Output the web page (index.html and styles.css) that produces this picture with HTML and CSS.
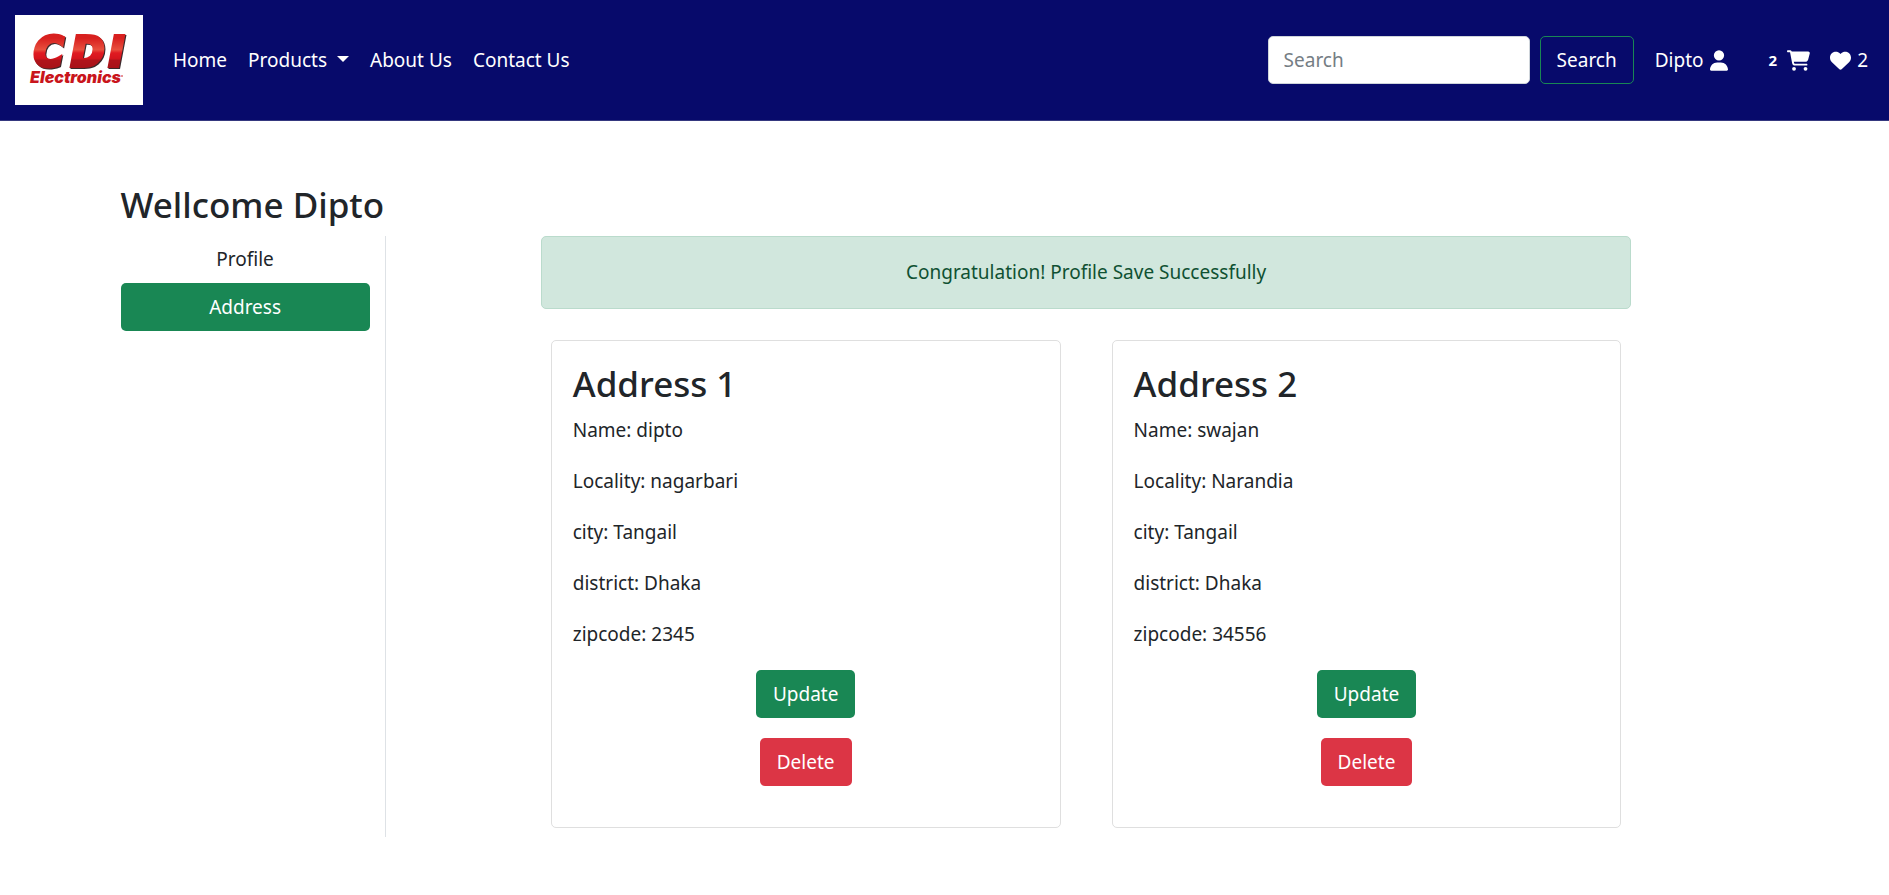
FILE: index.html
```html
<!DOCTYPE html>
<html lang="en">
<head>
<meta charset="utf-8">
<meta name="viewport" content="width=device-width, initial-scale=1">
<title>Address</title>
<link rel="stylesheet" href="styles.css">
</head>
<body>
<header class="navbar">
  <a class="brand" href="#" aria-label="CDI Electronics">
    <svg class="logo" viewBox="0 0 128 90" role="img" aria-hidden="true">
      <defs>
        <linearGradient id="red" x1="0" y1="0" x2="0" y2="1">
          <stop offset="0.2" stop-color="#d8201f"/>
          <stop offset="0.45" stop-color="#e8503e"/>
          <stop offset="0.52" stop-color="#e01b22"/>
          <stop offset="0.64" stop-color="#d5151d"/>
          <stop offset="0.68" stop-color="#b0141b"/>
          <stop offset="1" stop-color="#a01015"/>
        </linearGradient>
      </defs>
      <rect width="128" height="90" fill="#fff"/>
      <text class="logo-main" x="19 56 94" y="51" fill="url(#red)" stroke="url(#red)">CDI</text>
      <text class="logo-sub" x="15" y="68">Electronics</text>
      <circle cx="107" cy="61" r="1" fill="#e07070"/>
    </svg>
  </a>
  <nav class="links" aria-label="Main">
    <a href="#">Home</a>
    <a class="dropdown" href="#">Products</a>
    <a href="#">About Us</a>
    <a href="#">Contact Us</a>
  </nav>
  <form class="search" role="search">
    <input class="search-box" type="search" placeholder="Search" aria-label="Search">
    <button class="btn btn-outline" type="submit">Search</button>
  </form>
  <nav class="account" aria-label="Account">
    <a class="user" href="#">Dipto
      <svg class="icon-user" viewBox="0 0 448 512" aria-hidden="true"><path d="M224 256A128 128 0 1 0 224 0a128 128 0 1 0 0 256zm-45.700 48C79.800 304 0 383.800 0 482.300 0 498.700 13.300 512 29.700 512h388.600c16.400 0 29.700-13.300 29.700-29.700 0-98.500-79.800-178.300-178.300-178.300z"/></svg>
    </a>
    <a class="cart" href="#" aria-label="Cart"><span class="badge">2</span>
      <svg class="icon-cart" viewBox="0 0 576 512" aria-hidden="true"><path d="M0 24C0 10.700 10.700 0 24 0h45.500c22 0 41.500 12.800 50.600 32h411c26.300 0 45.500 25 38.600 50.400l-41 152.300c-8.500 31.400-37 53.300-69.500 53.300H170.700l5.400 28.500c2.200 11.300 12.100 19.500 23.600 19.500H488c13.300 0 24 10.700 24 24s-10.700 24-24 24H199.700c-34.600 0-64.300-24.600-70.700-58.500L77.400 54.500C76.700 50.700 73.400 48 69.500 48H24C10.700 48 0 37.300 0 24zm128 440a48 48 0 1 1 96 0 48 48 0 1 1-96 0zm336-48a48 48 0 1 1 0 96 48 48 0 1 1 0-96z"/></svg>
    </a>
    <a class="wish" href="#" aria-label="Wishlist">
      <svg class="icon-heart" viewBox="0 0 512 512" aria-hidden="true"><path d="M47.600 300.400 228.300 469.100c7.500 7 17.400 10.900 27.700 10.900s20.200-3.900 27.700-10.900L464.400 300.400c30.400-28.300 47.600-68 47.600-109.500v-5.800c0-69.900-50.500-129.500-119.400-141C347 36.500 300.600 51.400 268 84l-12 12-12-12c-32.600-32.600-79-47.500-124.600-39.900C50.500 55.600 0 115.200 0 185.100v5.800c0 41.500 17.200 81.200 47.600 109.500z"/></svg>
      <span>2</span>
    </a>
  </nav>
</header>
<main class="container">
  <h2>Wellcome Dipto</h2>
  <div class="layout">
    <aside class="sidebar">
      <a class="side-link" href="#">Profile</a>
      <a class="side-link active" href="#" aria-current="page">Address</a>
    </aside>
    <section class="content">
      <div class="alert" role="alert">Congratulation! Profile Save Successfully</div>
      <div class="cards">
        <article class="card">
          <h2>Address 1</h2>
          <p>Name: dipto</p>
          <p>Locality: nagarbari</p>
          <p>city: Tangail</p>
          <p>district: Dhaka</p>
          <p>zipcode: 2345</p>
          <div class="actions">
            <button class="btn btn-success" type="button">Update</button>
            <button class="btn btn-danger" type="button">Delete</button>
          </div>
        </article>
        <article class="card">
          <h2>Address 2</h2>
          <p>Name: swajan</p>
          <p>Locality: Narandia</p>
          <p>city: Tangail</p>
          <p>district: Dhaka</p>
          <p>zipcode: 34556</p>
          <div class="actions">
            <button class="btn btn-success" type="button">Update</button>
            <button class="btn btn-danger" type="button">Delete</button>
          </div>
        </article>
      </div>
    </section>
  </div>
</main>
</body>
</html>
```
FILE: styles.css
```css
* {
  box-sizing: border-box;
}

body {
  margin: 0;
  background: #fff;
  color: #212529;
  font-family: "Noto Sans", "Open Sans", sans-serif;
  font-size: 19px;
  line-height: 31px;
}

a {
  color: inherit;
  text-decoration: none;
}

h2 {
  margin: 0 0 8px;
  font-size: 35px;
  font-weight: 500;
  line-height: 46px;
}

p {
  margin: 0 0 20px;
}

/* Navigation bar */
.navbar {
  display: flex;
  align-items: center;
  padding: 15px 21px 15px 15px;
  border-bottom: 1px solid #35387f;
  background: #070a6b;
  color: #fff;
}

.brand {
  margin-right: 30px;
}

.logo {
  display: block;
  width: 128px;
  height: 90px;
}

.logo-main {
  filter: drop-shadow(1px 1px 0 #3a2a2c);
  font: italic 700 40px "DejaVu Sans", sans-serif;
  stroke-width: 4px;
}

.logo-sub {
  fill: #c9151c;
  font: italic 900 16px Inter, sans-serif;
}

.links {
  display: flex;
  gap: 21px;
  margin-right: auto;
}

.dropdown::after {
  content: "";
  display: inline-block;
  margin-left: 10px;
  border-top: 6px solid;
  border-right: 6px solid transparent;
  border-left: 6px solid transparent;
  vertical-align: 5px;
}

.search {
  display: flex;
  gap: 10px;
  margin-right: 21px;
}

.search-box {
  width: 262px;
  height: 48px;
  padding: 0 15px;
  border: 1px solid #ced4da;
  border-radius: 5px;
  background: #fff;
  color: #212529;
  font: inherit;
}

.search-box::placeholder {
  color: #757d84;
  opacity: 1;
}

.btn {
  height: 48px;
  padding: 0 16px;
  border: 1px solid transparent;
  border-radius: 5px;
  color: #fff;
  font: inherit;
  cursor: pointer;
}

.btn-outline {
  border-color: #198754;
  background: transparent;
}

.btn-success {
  background: #198754;
}

.btn-danger {
  background: #dc3545;
}

.account,
.user,
.cart,
.wish {
  display: flex;
  align-items: center;
}

.user,
.wish {
  gap: 6px;
}

.cart {
  gap: 10px;
  margin: 0 20px 0 41px;
}

.badge {
  font-size: 15px;
  font-weight: 700;
}

.account svg {
  height: 21px;
  fill: currentColor;
}

.icon-user {
  width: 18px;
}

.icon-cart {
  width: 23px;
}

.icon-heart {
  width: 21px;
}

/* Page body */
.container {
  max-width: 1684px;
  margin: 0 auto;
  padding: 61px 0 0 3px;
}

.container > h2 {
  padding-left: 15px;
}

.layout {
  display: grid;
  grid-template-columns: 2fr 1fr 8fr 1fr;
}

.sidebar {
  display: flex;
  flex-direction: column;
  padding: 0 15px;
  border-right: 1px solid #dee2e6;
}

.side-link {
  padding: 8px 15px;
  border-radius: 5px;
  text-align: center;
}

.side-link.active {
  background: #198754;
  color: #fff;
  line-height: 32px;
}

.content {
  grid-column: 3;
  padding: 0 15px;
}

.alert {
  padding: 20px;
  border: 1px solid #badbcc;
  border-radius: 5px;
  background: #d1e7dd;
  color: #0f5132;
  text-align: center;
}

.cards {
  display: grid;
  grid-template-columns: 1fr 1fr;
  gap: 51px;
  padding: 31px 10px 9px;
}

.card {
  padding: 20px 21px 41px;
  border: 1px solid #dfdfdf;
  border-radius: 5px;
}

.actions {
  display: flex;
  flex-direction: column;
  align-items: center;
  gap: 20px;
}
```
